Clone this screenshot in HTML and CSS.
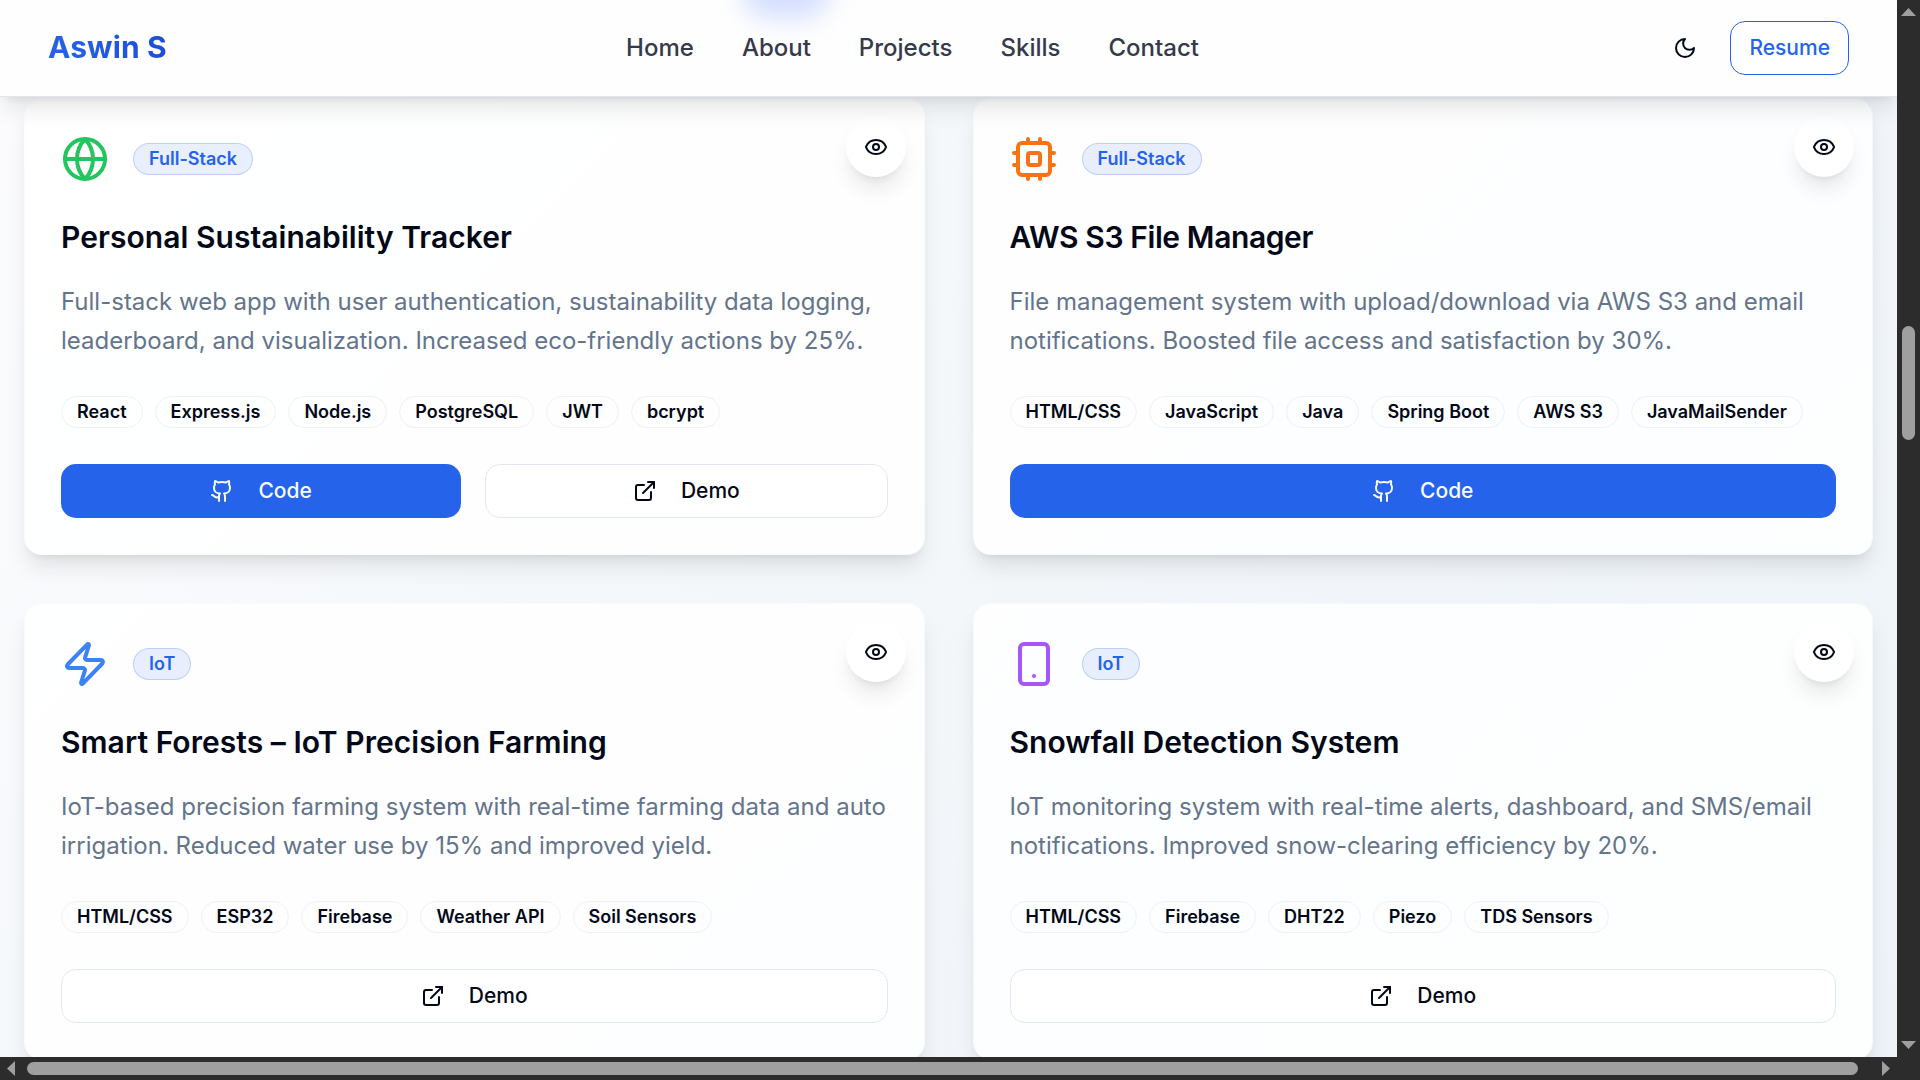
FILE: index.html
```html
<!DOCTYPE html>
<html lang="en">
<head>
<meta charset="utf-8">
<title>Aswin S</title>
<link rel="stylesheet" href="styles.css">
</head>
<body>
<svg class="sprite" aria-hidden="true">
  <symbol id="i-globe" viewBox="0 0 24 24"><circle cx="12" cy="12" r="10"/><path d="M12 2a14.5 14.5 0 0 0 0 20 14.5 14.5 0 0 0 0-20"/><path d="M2 12h20"/></symbol>
  <symbol id="i-cpu" viewBox="0 0 24 24"><rect width="16" height="16" x="4" y="4" rx="2"/><rect width="6" height="6" x="9" y="9" rx="1"/><path d="M15 2v2M15 20v2M2 15h2M2 9h2M20 15h2M20 9h2M9 2v2M9 20v2"/></symbol>
  <symbol id="i-zap" viewBox="0 0 24 24"><path d="M4 14a1 1 0 0 1-.78-1.63l9.9-10.2a.5.5 0 0 1 .86.46l-1.92 6.02A1 1 0 0 0 13 10h7a1 1 0 0 1 .78 1.63l-9.9 10.2a.5.5 0 0 1-.86-.46l1.92-6.02A1 1 0 0 0 11 14z"/></symbol>
  <symbol id="i-phone" viewBox="0 0 24 24"><rect width="14" height="20" x="5" y="2" rx="2" ry="2"/><path d="M12 18h.01"/></symbol>
  <symbol id="i-eye" viewBox="0 0 24 24"><path d="M2.062 12.348a1 1 0 0 1 0-.696 10.75 10.75 0 0 1 19.876 0 1 1 0 0 1 0 .696 10.75 10.75 0 0 1-19.876 0"/><circle cx="12" cy="12" r="3"/></symbol>
  <symbol id="i-moon" viewBox="0 0 24 24"><path d="M12 3a6 6 0 0 0 9 9 9 9 0 1 1-9-9Z"/></symbol>
  <symbol id="i-github" viewBox="0 0 24 24"><path d="M15 22v-4a4.8 4.8 0 0 0-1-3.5c3 0 6-2 6-5.5.08-1.25-.27-2.48-1-3.5.28-1.15.28-2.35 0-3.5 0 0-1 0-3 1.5-2.64-.5-5.36-.5-8 0C6 2 5 2 5 2c-.3 1.15-.3 2.35 0 3.5A5.403 5.403 0 0 0 4 9c0 3.5 3 5.5 6 5.5-.39.49-.68 1.05-.85 1.65-.17.6-.22 1.23-.15 1.85v4"/><path d="M9 18c-4.51 2-5-2-7-2"/></symbol>
  <symbol id="i-link" viewBox="0 0 24 24"><path d="M15 3h6v6"/><path d="M10 14 21 3"/><path d="M18 13v6a2 2 0 0 1-2 2H5a2 2 0 0 1-2-2V8a2 2 0 0 1 2-2h6"/></symbol>
</svg>
<div class="window">
  <div class="page">
    <header class="header">
      <span class="glow"></span>
      <a class="logo">Aswin S</a>
      <nav class="nav"><a>Home</a><a>About</a><a>Projects</a><a>Skills</a><a>Contact</a></nav>
      <div class="actions">
        <span class="theme"><svg class="icon"><use href="#i-moon"/></svg></span>
        <a class="resume">Resume</a>
      </div>
    </header>
    <main class="projects">
      <article class="card">
        <button class="view"><svg class="icon"><use href="#i-eye"/></svg></button>
        <div class="card-head"><svg class="icon big green"><use href="#i-globe"/></svg><span class="badge">Full-Stack</span></div>
        <h3 class="title">Personal Sustainability Tracker</h3>
        <p class="desc">Full-stack web app with user authentication, sustainability data logging, leaderboard, and visualization. Increased eco-friendly actions by 25%.</p>
        <div class="tags"><span>React</span><span>Express.js</span><span>Node.js</span><span>PostgreSQL</span><span>JWT</span><span>bcrypt</span></div>
        <div class="buttons"><a class="btn primary"><svg class="icon"><use href="#i-github"/></svg><span>Code</span></a><a class="btn outline"><svg class="icon"><use href="#i-link"/></svg><span>Demo</span></a></div>
      </article>
      <article class="card">
        <button class="view"><svg class="icon"><use href="#i-eye"/></svg></button>
        <div class="card-head"><svg class="icon big orange"><use href="#i-cpu"/></svg><span class="badge">Full-Stack</span></div>
        <h3 class="title tight">AWS S3 File Manager</h3>
        <p class="desc">File management system with upload/download via AWS S3 and email notifications. Boosted file access and satisfaction by 30%.</p>
        <div class="tags"><span>HTML/CSS</span><span>JavaScript</span><span>Java</span><span>Spring Boot</span><span>AWS S3</span><span>JavaMailSender</span></div>
        <div class="buttons"><a class="btn primary"><svg class="icon"><use href="#i-github"/></svg><span>Code</span></a></div>
      </article>
      <article class="card">
        <button class="view"><svg class="icon"><use href="#i-eye"/></svg></button>
        <div class="card-head"><svg class="icon big blue"><use href="#i-zap"/></svg><span class="badge">IoT</span></div>
        <h3 class="title">Smart Forests – IoT Precision Farming</h3>
        <p class="desc">IoT-based precision farming system with real-time farming data and auto irrigation. Reduced water use by 15% and improved yield.</p>
        <div class="tags"><span>HTML/CSS</span><span>ESP32</span><span>Firebase</span><span>Weather API</span><span>Soil Sensors</span></div>
        <div class="buttons"><a class="btn outline"><svg class="icon"><use href="#i-link"/></svg><span>Demo</span></a></div>
      </article>
      <article class="card">
        <button class="view"><svg class="icon"><use href="#i-eye"/></svg></button>
        <div class="card-head"><svg class="icon big purple"><use href="#i-phone"/></svg><span class="badge">IoT</span></div>
        <h3 class="title">Snowfall Detection System</h3>
        <p class="desc">IoT monitoring system with real-time alerts, dashboard, and SMS/email notifications. Improved snow-clearing efficiency by 20%.</p>
        <div class="tags"><span>HTML/CSS</span><span>Firebase</span><span>DHT22</span><span>Piezo</span><span>TDS Sensors</span></div>
        <div class="buttons"><a class="btn outline"><svg class="icon"><use href="#i-link"/></svg><span>Demo</span></a></div>
      </article>
    </main>
  </div>
  <div class="vbar"><i class="arrow up"></i><i class="vthumb"></i><i class="arrow down"></i></div>
  <div class="hbar"><i class="arrow left"></i><i class="hthumb"></i><i class="arrow right"></i></div>
</div>
</body>
</html>
```
FILE: styles.css
```css
* { box-sizing: border-box; }
body { margin: 0; overflow: hidden; font-family: Inter, sans-serif; color: #020817; }
.sprite { display: none; }
.window {
  width: 1920px; height: 1080px; overflow: hidden;
  display: grid; grid-template: 1057px 23px / 1897px 23px;
  background: #2c2c2c;
}
.page {
  overflow: hidden; display: flex; flex-direction: column;
  background: linear-gradient(135deg, #fcfcfe 0%, #f3f7fa 50%, #eef3f9 100%);
}
.header {
  position: relative; z-index: 2; overflow: visible; flex: none;
  height: 97px; padding: 0 48px; border-bottom: 1px solid #e2e5ec;
  display: flex; justify-content: space-between; align-items: center;
  background: #fefefe;
  box-shadow: 0 15px 22.5px -4.5px rgba(0,0,0,.1), 0 6px 9px -6px rgba(0,0,0,.1);
}
.glow {
  position: absolute; left: 742px; top: -38px; width: 88px; height: 56px;
  border-radius: 28px; background: #d2defd; filter: blur(13px);
}
.logo {
  font-weight: 700; font-size: 30px; line-height: 36px; letter-spacing: .1px; padding-bottom: 2px;
  background: linear-gradient(90deg, #2563eb, #1d4ed8);
  -webkit-background-clip: text; background-clip: text; color: transparent;
}
.nav { position: relative; display: flex; gap: 48px; padding-bottom: 2px; font-size: 24px; font-weight: 500; color: #35394a; }
.actions { display: flex; align-items: center; gap: 18px; }
.theme { width: 54px; height: 54px; display: grid; place-items: center; }
.resume {
  height: 54px; padding: 0 18px 1px; border: 1px solid #2563eb; border-radius: 15px;
  display: flex; align-items: center; font-size: 21px; font-weight: 500; color: #2563eb; background: #fff;
}
.icon { display: block; flex: none; width: 24px; height: 24px; fill: none; stroke: currentColor; stroke-width: 2; stroke-linecap: round; stroke-linejoin: round; }
.big { width: 48px; height: 48px; }
.green { color: #22c55e; }
.orange { color: #f97316; }
.blue { color: #3b82f6; }
.purple { color: #a855f7; }
.projects { padding: 1px 24px 0; display: grid; grid-template-columns: 1fr 1fr; gap: 48px; }
.card {
  position: relative; height: 457px; padding: 36px; border: 1px solid rgba(255,255,255,.4); border-radius: 18px;
  background: rgba(255,255,255,.85); background-clip: padding-box;
  box-shadow: 0 15px 22.5px -4.5px rgba(0,0,0,.1), 0 6px 9px -6px rgba(0,0,0,.1);
}
.view {
  position: absolute; top: 18px; right: 18px; width: 60px; height: 60px; padding: 0; border: 0; border-radius: 50%;
  display: grid; place-items: center; background: #fff; color: #020817;
  box-shadow: 0 15px 22.5px -4.5px rgba(0,0,0,.1), 0 6px 9px -6px rgba(0,0,0,.1);
}
.card-head { display: flex; align-items: center; gap: 24px; }
.badge, .tags span {
  height: 32px; padding: 0 15px; border-radius: 16px; font-size: 18px; line-height: 30px; font-weight: 600; white-space: nowrap;
}
.badge { color: #2563eb; background: rgba(37,99,235,.1); border: 1px solid rgba(37,99,235,.22); }
.title { margin: 36px 0 27px; line-height: 36px; font-size: 30px; font-weight: 600; letter-spacing: .05px; white-space: nowrap; }
.tight { letter-spacing: -.4px; }
.desc { margin: 0; font-size: 24px; line-height: 39px; color: #64748b; }
.tags { display: flex; gap: 12px; margin: 36px 0; }
.tags span { border: 1px solid #eef1f6; }
.buttons { display: flex; gap: 24px; }
.btn { flex: 1 1 0; height: 54px; border-radius: 15px; display: flex; align-items: center; justify-content: center; gap: 24px; font-size: 21px; font-weight: 500; }
.btn span { padding-bottom: 2px; }
.primary { background: #2563eb; color: #f8fafc; }
.outline { border: 1px solid #e2e8f0; background: #fff; }
.vbar { display: flex; flex-direction: column; align-items: center; padding: 8px 0; }
.vthumb { width: 13px; height: 114px; margin: 310px 0 auto; border-radius: 7px; background: #9f9f9f; }
.hbar { display: flex; align-items: center; padding: 0 7px; }
.hthumb { width: 1831px; height: 13px; margin: 0 auto 0 12px; border-radius: 7px; background: #9f9f9f; }
.arrow { background: #9f9f9f; }
.up, .down { width: 15px; height: 8px; clip-path: polygon(50% 0, 100% 100%, 0 100%); }
.down { transform: scaleY(-1); }
.left, .right { width: 8px; height: 15px; clip-path: polygon(0 50%, 100% 0, 100% 100%); }
.right { transform: scaleX(-1); }
```
